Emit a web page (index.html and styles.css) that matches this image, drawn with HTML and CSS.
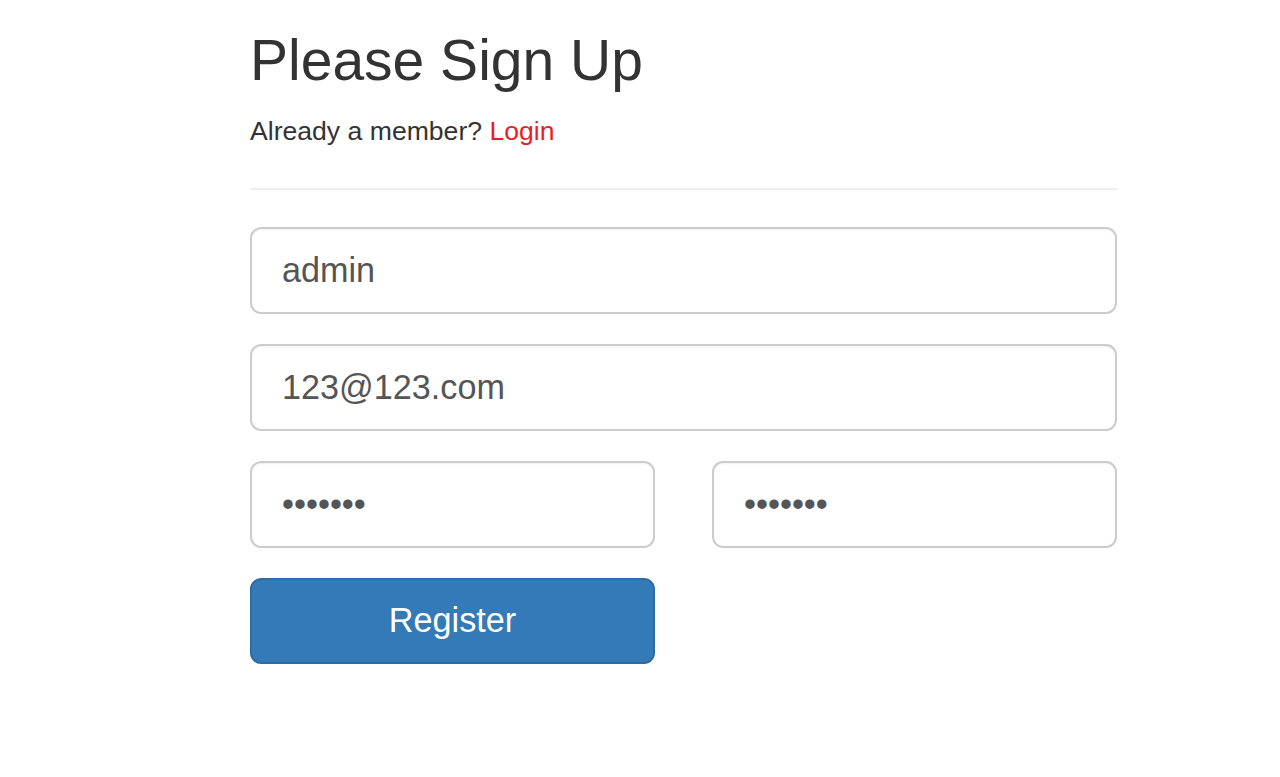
FILE: index.html
```html
<!DOCTYPE html>
<html lang="en">
<head>
<meta charset="utf-8">
<title>Please Sign Up</title>
<link rel="stylesheet" href="styles.css">
</head>
<body>
<div class="page">
  <form class="signup">
    <h1 class="title">Please Sign Up</h1>
    <p class="lead-in">Already a member? <a class="login" href="#">Login</a></p>
    <hr class="divider">
    <div class="group"><input class="field" type="text" value="admin"></div>
    <div class="group"><input class="field" type="email" value="123@123.com"></div>
    <div class="pair">
      <input class="field" type="password" value="1234567">
      <input class="field" type="password" value="1234567">
    </div>
    <div class="pair">
      <button class="btn-register" type="button">Register</button>
    </div>
  </form>
</div>
</body>
</html>
```

FILE: styles.css
```css
html, body {
  margin: 0;
  padding: 0;
  background: #fff;
}
body {
  font-family: "Liberation Sans", Arial, sans-serif;
  color: #333;
  font-size: 26.6px;
  line-height: 1.42857;
}
.page {
  padding-top: 29px;
  margin-left: 250px;
  width: 867px;
}
.signup {
  display: flex;
  flex-direction: column;
}
.title {
  margin: 0;
  font-size: 57px;
  line-height: 62px;
  font-weight: 400;
  color: #333;
}
.lead-in {
  margin: 22px 0 0;
  line-height: 37.5px;
}
.login {
  color: #ed1c24;
  text-decoration: none;
}
.divider {
  margin: 37.5px 0 37px;
  border: 0;
  border-top: 2px solid #eeeeee;
  height: 0;
}
.group {
  margin-bottom: 30.5px;
}
.field {
  display: block;
  box-sizing: border-box;
  width: 100%;
  height: 86.5px;
  padding: 0 30px;
  font-family: "Liberation Sans", Arial, sans-serif;
  font-size: 34.2px;
  color: #555;
  background: #fff;
  border: 2px solid #ccc;
  border-radius: 11px;
  box-shadow: inset 0 1px 2px rgba(0, 0, 0, 0.06);
  outline: none;
}
.pair {
  display: grid;
  grid-template-columns: 1fr 1fr;
  column-gap: 57px;
  margin-bottom: 30px;
}
.btn-register {
  box-sizing: border-box;
  height: 86.5px;
  font-family: "Liberation Sans", Arial, sans-serif;
  font-size: 34.2px;
  color: #fff;
  background: #337ab7;
  border: 2px solid #2e6da4;
  border-radius: 11px;
  cursor: pointer;
}
```
